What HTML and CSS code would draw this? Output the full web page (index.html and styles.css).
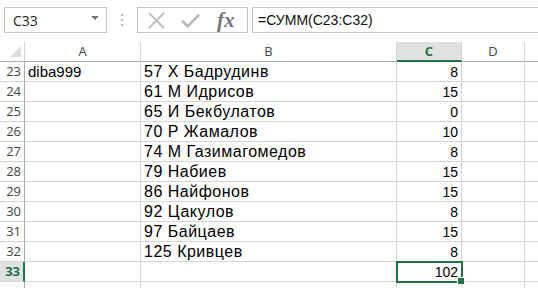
FILE: index.html
```html
<!DOCTYPE html>
<html>
<head>
<meta charset="utf-8">
<link rel="stylesheet" href="styles.css">
</head>
<body>
<div class="bar">
  <div class="namebox"><span class="ref">C33</span><span class="arrow"></span></div>
  <div class="grip"><i></i><i></i><i></i></div>
  <div class="fxbox">
    <svg class="ico" width="20" height="20" viewBox="0 0 20 20"><path d="M2 2 L18 18 M18 2 L2 18" stroke="#bcbcbc" stroke-width="2" fill="none"/></svg>
    <svg class="ico" width="20" height="20" viewBox="0 0 20 20"><path d="M1 10 L7 16 L19 4" stroke="#bcbcbc" stroke-width="3" fill="none"/></svg>
    <span class="fx">fx</span>
  </div>
  <div class="formula">=СУММ(C23:C32)</div>
</div>
<div class="sheet">
  <div class="corner"><span class="tri"></span></div>
  <div class="ch">A</div>
  <div class="ch">B</div>
  <div class="ch sel">C</div>
  <div class="ch">D</div>
  <div class="ch last"></div>

  <div class="rh">23</div><div class="c">diba999</div><div class="c b">57 Х Бадрудинв</div><div class="c n">8</div><div class="c"></div><div class="c last"></div>
  <div class="rh">24</div><div class="c"></div><div class="c b">61 М Идрисов</div><div class="c n">15</div><div class="c"></div><div class="c last"></div>
  <div class="rh">25</div><div class="c"></div><div class="c b">65 И Бекбулатов</div><div class="c n">0</div><div class="c"></div><div class="c last"></div>
  <div class="rh">26</div><div class="c"></div><div class="c b">70 Р Жамалов</div><div class="c n">10</div><div class="c"></div><div class="c last"></div>
  <div class="rh">27</div><div class="c"></div><div class="c b">74 М Газимагомедов</div><div class="c n">8</div><div class="c"></div><div class="c last"></div>
  <div class="rh">28</div><div class="c"></div><div class="c b">79 Набиев</div><div class="c n">15</div><div class="c"></div><div class="c last"></div>
  <div class="rh">29</div><div class="c"></div><div class="c b">86 Найфонов</div><div class="c n">15</div><div class="c"></div><div class="c last"></div>
  <div class="rh">30</div><div class="c"></div><div class="c b">92 Цакулов</div><div class="c n">8</div><div class="c"></div><div class="c last"></div>
  <div class="rh">31</div><div class="c"></div><div class="c b">97 Байцаев</div><div class="c n">15</div><div class="c"></div><div class="c last"></div>
  <div class="rh">32</div><div class="c"></div><div class="c b">125 Кривцев</div><div class="c n">8</div><div class="c"></div><div class="c last"></div>
  <div class="rh sel">33</div><div class="c"></div><div class="c"></div><div class="c n active">102<span class="handle"></span></div><div class="c"></div><div class="c last"></div>
  <div class="rh"></div><div class="c"></div><div class="c"></div><div class="c"></div><div class="c"></div><div class="c last"></div>
</div>
</body>
</html>
```
FILE: styles.css
```css
html, body {
  margin: 0;
  padding: 0;
  background: #fff;
  width: 538px;
  height: 288px;
  overflow: hidden;
}
.bar {
  height: 42px;
  display: flex;
  align-items: flex-start;
  padding-top: 7px;
  box-sizing: border-box;
  padding-left: 4px;
}
.namebox {
  width: 103px;
  height: 26px;
  box-sizing: border-box;
  border: 1px solid #c6c6c6;
  display: flex;
  align-items: center;
  justify-content: space-between;
  padding: 0 7px 0 8px;
  font-family: "Open Sans", "Liberation Sans", sans-serif;
  font-size: 14px;
  color: #222;
}
.arrow {
  width: 0;
  height: 0;
  border-left: 4px solid transparent;
  border-right: 4px solid transparent;
  border-top: 4px solid #777;
  margin-top: -5px;
}
.grip {
  width: 30px;
  display: flex;
  flex-direction: column;
  align-items: center;
  gap: 3px;
  padding-top: 7px;
}
.grip i {
  width: 2px;
  height: 2px;
  background: #b8b8b8;
}
.fxbox {
  width: 111px;
  height: 26px;
  box-sizing: border-box;
  border: 1px solid #c6c6c6;
  display: flex;
  align-items: center;
  gap: 15px;
  padding-left: 9px;
}
.ico { display: block; width: 19px; height: 19px; }
.fx {
  font-family: "Liberation Serif", serif;
  font-style: italic;
  font-weight: bold;
  font-size: 21px;
  color: #777;
  line-height: 20px;
  margin-left: 2px;
}
.formula {
  margin-left: 4px;
  flex: 1;
  height: 26px;
  box-sizing: border-box;
  border: 1px solid #c6c6c6;
  border-right: none;
  padding-left: 5px;
  font-family: "Liberation Sans", sans-serif;
  font-size: 14px;
  line-height: 24px;
  color: #111;
}
.sheet {
  display: grid;
  grid-template-columns: 25px 116px 256px 65px 63px 20px;
  grid-auto-rows: 20px;
}
.sheet > div {
  box-sizing: border-box;
  border-right: 1px solid #d4d4d4;
  border-bottom: 1px solid #d4d4d4;
}
.sheet > div.last { border-right: none; }
.corner {
  position: relative;
  border-bottom-color: #ababab !important;
}
.tri {
  position: absolute;
  right: 3px;
  bottom: 4px;
  width: 0;
  height: 0;
  border-left: 11px solid transparent;
  border-bottom: 11px solid #dcdcdc;
}
.ch {
  font-family: "Open Sans", "Liberation Sans", sans-serif;
  font-size: 13px;
  color: #444;
  text-align: center;
  line-height: 19px;
  border-bottom-color: #ababab !important;
}
.ch.sel {
  background: #e1e1e1;
  color: #217346;
  font-weight: bold;
  border-bottom: 2px solid #217346 !important;
  line-height: 18px;
}
.rh {
  font-family: "Open Sans", "Liberation Sans", sans-serif;
  font-size: 13px;
  color: #444;
  text-align: right;
  padding-right: 3px;
  line-height: 19px;
  border-right-color: #ababab !important;
}
.rh.sel {
  color: #217346;
  font-weight: bold;
  background: #e1e1e1;
  border-right: 2px solid #217346 !important;
}
.c {
  font-family: "Liberation Sans", sans-serif;
  font-size: 15px;
  color: #000;
  line-height: 20px;
  padding-left: 3px;
  white-space: nowrap;
  overflow: visible;
}
.c.b {
  font-size: 16px;
  letter-spacing: 0.5px;
}
.c.n {
  font-size: 14px;
  text-align: right;
  padding-right: 3px;
  padding-left: 0;
}
.c.active {
  position: relative;
  outline: 2px solid #217346;
  outline-offset: -1px;
  z-index: 2;
}
.handle {
  position: absolute;
  right: -4px;
  bottom: -4px;
  width: 6px;
  height: 6px;
  background: #217346;
  border: 1px solid #fff;
}
```
